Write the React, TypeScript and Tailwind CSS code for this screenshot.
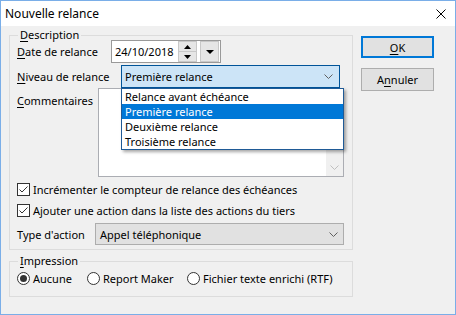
import React from "react";

function Chevron({ color = "#606060" }: { color?: string }) {
  return (
    <svg width="9" height="5" viewBox="0 0 9 5">
      <path d="M0.5 0.5L4.5 4.5L8.5 0.5" fill="none" stroke={color} strokeWidth="1" />
    </svg>
  );
}

function Check() {
  return (
    <span className="w-[13px] h-[13px] border border-[#333333] bg-white flex items-center justify-center shrink-0">
      <svg width="11" height="11" viewBox="0 0 11 11">
        <path d="M1.5 5.5L4 8L9.5 2.5" fill="none" stroke="#333333" strokeWidth="1" />
      </svg>
    </span>
  );
}

function Radio({ checked }: { checked?: boolean }) {
  return (
    <span className="w-[13px] h-[13px] rounded-full border border-[#333333] bg-white flex items-center justify-center shrink-0">
      {checked && <span className="w-[7px] h-[7px] rounded-full bg-[#333333]" />}
    </span>
  );
}

export default function App() {
  return (
    <div className="w-[456px] h-[315px] border border-[#7aaee8] flex flex-col bg-[#f0f0f0] text-[11px] leading-[15px] text-black font-['Noto_Sans','Open_Sans',sans-serif]">
      {/* Title bar */}
      <div className="h-[25px] bg-white flex items-center justify-between pl-[4px] pr-[9px] shrink-0">
        <span className="text-[12px]">Nouvelle relance</span>
        <svg width="10" height="10" viewBox="0 0 10 10">
          <path d="M0.5 0.5L9.5 9.5M9.5 0.5L0.5 9.5" stroke="#000" strokeWidth="1" fill="none" />
        </svg>
      </div>

      <div className="flex-1 flex">
        {/* Left column */}
        <div className="flex flex-col ml-[8px] mt-[9px] w-[344px]">
          {/* Description group */}
          <div className="relative border border-[#dcdcdc] pl-[7px] pr-[8px] pt-[4px] pb-[4px] flex flex-col">
            <span className="absolute left-[8px] top-[-9px] h-[16px] leading-[16px] px-[2px] bg-[#f0f0f0]">
              <span className="underline underline-offset-2">D</span>escription
            </span>

            {/* Date row */}
            <div className="h-[23px] flex items-center">
              <span className="w-[94px] shrink-0">
                <span className="underline underline-offset-2">D</span>ate de relance
              </span>
              <div className="w-[110px] h-[23px] border border-[#999999] bg-white flex items-center pl-[3px] pr-[1px]">
                <span className="flex-1">24/10/2018</span>
                <div className="w-[19px] h-[21px] bg-[#e6e6e6] border border-[#c8c8c8] flex flex-col">
                  <div className="flex-1 flex items-center justify-center border-b border-[#c8c8c8]">
                    <svg width="7" height="4" viewBox="0 0 7 4"><path d="M3.5 0L7 4H0Z" fill="#000" /></svg>
                  </div>
                  <div className="flex-1 flex items-center justify-center">
                    <svg width="7" height="4" viewBox="0 0 7 4"><path d="M0 0H7L3.5 4Z" fill="#000" /></svg>
                  </div>
                </div>
                <div className="w-[19px] h-[21px] ml-[3px] bg-[#e6e6e6] border border-[#c8c8c8] flex items-center justify-center">
                  <svg width="8" height="4" viewBox="0 0 8 4"><path d="M0 0H8L4 4Z" fill="#000" /></svg>
                </div>
              </div>
            </div>

            {/* Niveau row */}
            <div className="h-[23px] mt-[2px] flex items-center">
              <span className="w-[104px] shrink-0">
                <span className="underline underline-offset-2">N</span>iveau de relance
              </span>
              <div className="relative w-[219px] h-[23px]">
                <div className="w-full h-full bg-[#cce4f7] border border-[#005499] flex items-center justify-between pl-[3px] pr-[6px]">
                  <span>Première relance</span>
                  <Chevron />
                </div>
                <div className="absolute left-0 top-[23px] w-[223px] z-10 bg-white border border-[#1f5a96] shadow-[2px_2px_3px_rgba(0,0,0,0.35)] flex flex-col">
                  <div className="h-[15px] pl-[3px] flex items-center">Relance avant échéance</div>
                  <div className="h-[15px] pl-[3px] flex items-center bg-[#0078d7] text-white">Première relance</div>
                  <div className="h-[15px] pl-[3px] flex items-center">Deuxième relance</div>
                  <div className="h-[15px] pl-[3px] flex items-center">Troisième relance</div>
                </div>
              </div>
            </div>

            {/* Commentaires */}
            <div className="flex">
              <span className="w-[81px] shrink-0 pt-[5px]">
                <span className="underline underline-offset-2">C</span>ommentaires
              </span>
              <div className="flex-1 h-[89px] border border-[#abadb3] bg-white flex justify-end">
                <div className="w-[17px] bg-[#f0f0f0] flex flex-col justify-end">
                  <div className="h-[17px] flex items-center justify-center">
                    <Chevron color="#bfbfbf" />
                  </div>
                </div>
              </div>
            </div>

            {/* Checkboxes */}
            <div className="h-[16px] mt-[4px] flex items-center gap-[3px]">
              <Check />
              <span>Incrémenter le compteur de relance des échéances</span>
            </div>
            <div className="h-[16px] mt-[5px] flex items-center gap-[3px]">
              <Check />
              <span>Ajouter une action dans la liste des actions du tiers</span>
            </div>

            {/* Type d'action */}
            <div className="h-[22px] mt-[5px] flex items-center">
              <span className="w-[78px] shrink-0">Type d'action</span>
              <div className="flex-1 h-[22px] bg-[#e1e1e1] border border-[#adadad] flex items-center justify-between pl-[4px] pr-[5px]">
                <span>Appel téléphonique</span>
                <Chevron />
              </div>
            </div>
          </div>

          {/* Impression group */}
          <div className="relative mt-[11px] h-[36px] border border-[#dcdcdc] pl-[7px] pt-[8px] flex items-start">
            <span className="absolute left-[8px] top-[-9px] h-[16px] leading-[16px] px-[2px] bg-[#f0f0f0]">
              <span className="underline underline-offset-2">I</span>mpression
            </span>
            <div className="h-[16px] w-[70px] flex items-center gap-[3px]">
              <Radio checked />
              <span>Aucune</span>
            </div>
            <div className="h-[16px] w-[100px] flex items-center gap-[3px]">
              <Radio />
              <span>Report Maker</span>
            </div>
            <div className="h-[16px] flex items-center gap-[3px]">
              <Radio />
              <span>Fichier texte enrichi (RTF)</span>
            </div>
          </div>
        </div>

        {/* Right column: buttons */}
        <div className="flex flex-col ml-[8px] mt-[10px]">
          <div className="w-[73px] h-[22px] bg-[#e1e1e1] border-2 border-[#0078d7] flex items-center justify-center">
            <span>
              <span className="underline underline-offset-2">O</span>K
            </span>
          </div>
          <div className="w-[73px] h-[23px] mt-[10px] bg-[#e1e1e1] border border-[#adadad] flex items-center justify-center">
            <span>
              A<span className="underline underline-offset-2">n</span>nuler
            </span>
          </div>
        </div>
      </div>
    </div>
  );
}
